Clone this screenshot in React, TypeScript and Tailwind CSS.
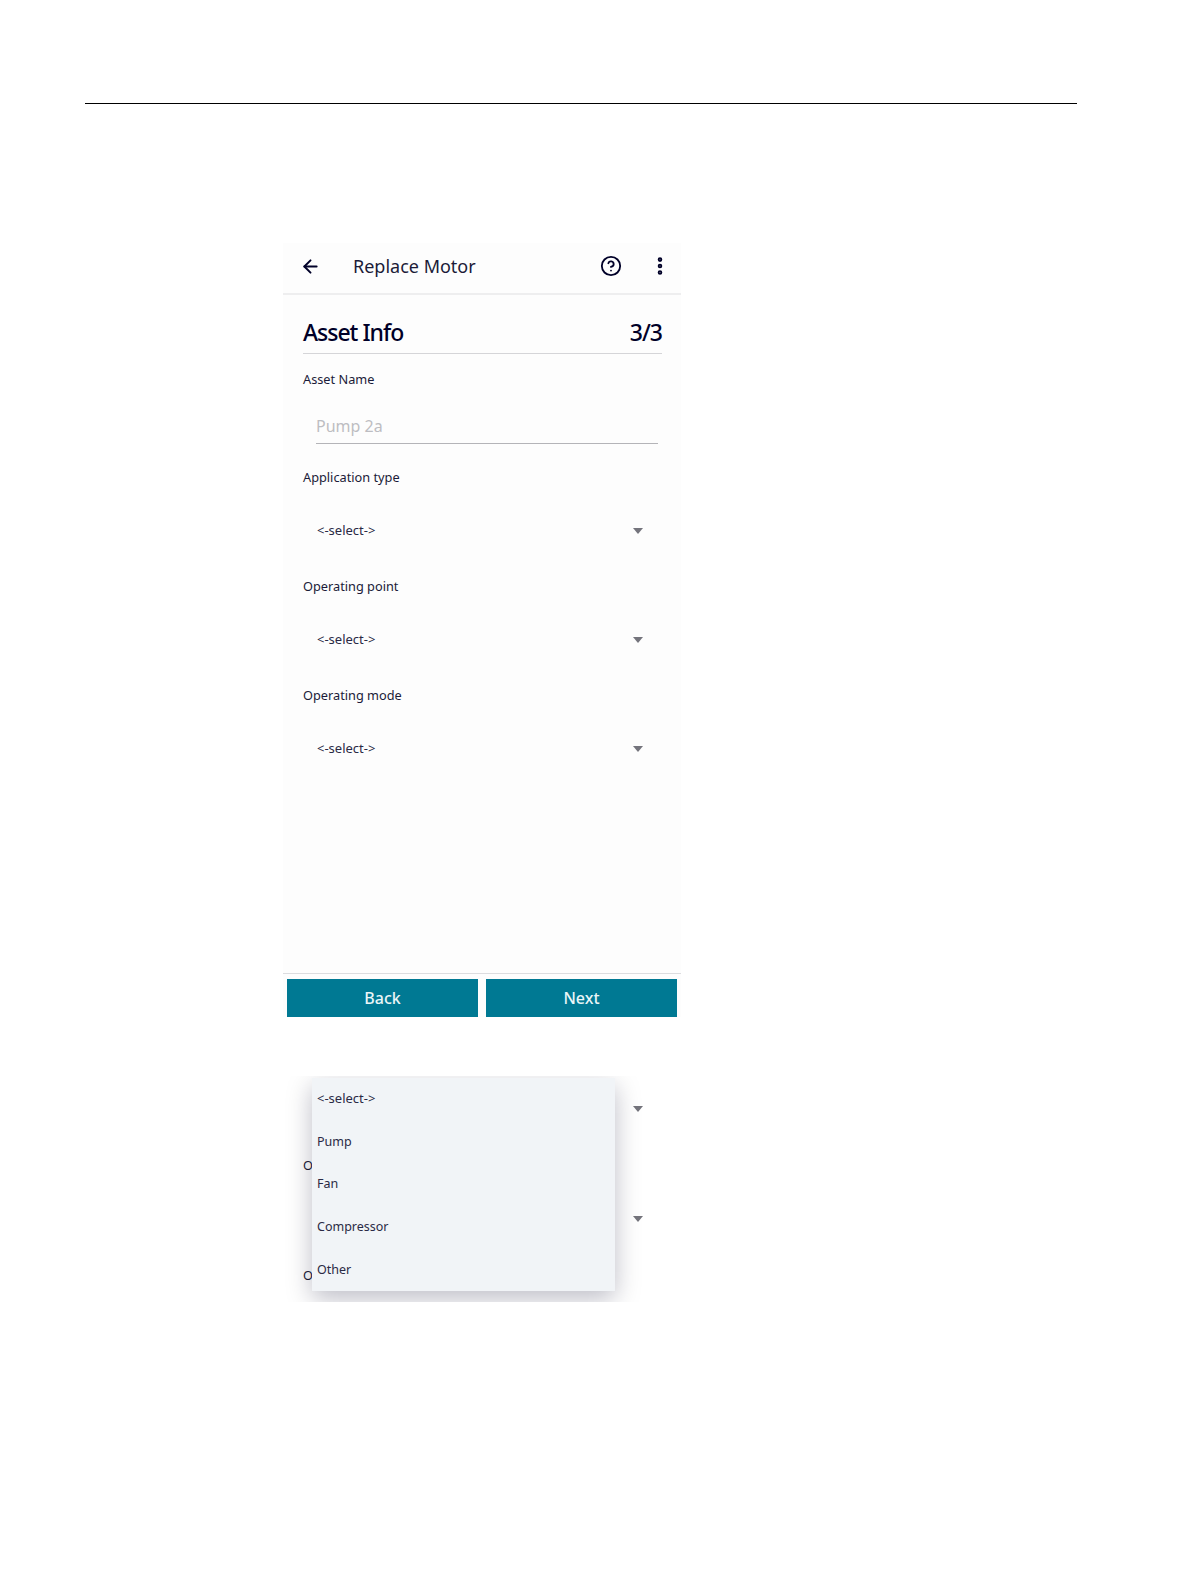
import React from 'react';
import { ArrowLeft, CircleHelp, EllipsisVertical } from 'lucide-react';

const fields = ['Application type', 'Operating point', 'Operating mode'];
const options = [
  { label: '<-select->', cls: 'text-[13px] pb-[2px]' },
  { label: 'Pump', cls: 'text-[12.5px]' },
  { label: 'Fan', cls: 'text-[12.5px]' },
  { label: 'Compressor', cls: 'text-[12.5px]' },
  { label: 'Other', cls: 'text-[12.5px] pt-[2px]' },
];

const Caret: React.FC = () => (
  <span className="w-0 h-0 border-x-[5.5px] border-x-transparent border-t-[6px] border-t-[#74747c]" />
);

const SelectRow: React.FC<{ label: string }> = ({ label }) => (
  <div className="flex flex-col">
    <div className="h-[20px] pb-[2px] flex items-center text-[12.75px] text-[#1b1b38] pl-[20px]">{label}</div>
    <div className="mt-[32px] h-[20px] flex items-center justify-between pl-[34px] pr-[38px] text-[13px] text-[#2a2a45]">
      <span>&lt;-select-&gt;</span>
      <Caret />
    </div>
  </div>
);

export default function App() {
  return (
    <div className="w-[1191px] h-[1587px] bg-white overflow-hidden font-['Noto_Sans',sans-serif]">
      <div className="pt-[103px] pl-[85px]">
        <div className="w-[992px] h-px bg-black" />
      </div>

      <div className="ml-[283px] w-[398px] mt-[139px] bg-[#fdfdfd]">
        {/* App bar */}
        <div className="h-[52px] flex items-center border-b-2 border-[#eeeeef] pl-[17px] pr-[10px] pb-[4px]">
          <ArrowLeft className="w-[21px] h-[21px] text-[#000028]" strokeWidth={2.25} />
          <span className="ml-[32px] text-[18px] text-[#1b1b38]">Replace Motor</span>
          <CircleHelp className="ml-auto w-[22px] h-[22px] text-[#000028]" strokeWidth={2} />
          <EllipsisVertical className="ml-[27px] w-[22px] h-[22px] text-[#000028]" strokeWidth={3} />
        </div>

        {/* Step title */}
        <div className="ml-[20px] mr-[19px] mt-[18px] h-[41px] pb-[2px] flex items-center justify-between border-b border-[#d5d5d8] text-[#000028] text-[23px] font-medium tracking-[-1px]">
          <span>Asset Info</span>
          <span>3/3</span>
        </div>

        <div className="mt-[17px] h-[20px] pb-[2px] flex items-center pl-[20px] text-[12.75px] text-[#1b1b38]">Asset Name</div>
        <div className="ml-[33px] mr-[23px] mt-[22px] h-[31px] pb-[5px] flex items-center border-b border-[#b4b4b8] text-[16px] text-[#bdbdc2]">
          Pump 2a
        </div>

        <div className="mt-[25px] flex flex-col gap-[37px]">
          {fields.map((f) => (
            <SelectRow key={f} label={f} />
          ))}
        </div>

        <div className="h-[214px]" />

        {/* Footer buttons */}
        <div className="border-t border-[#dcdcdf] pt-[5px] px-[4px] flex gap-[8px]">
          <button className="w-[191px] h-[38px] bg-[#007993] text-[#eaf6f8] text-[16px] font-medium">Back</button>
          <button className="w-[191px] h-[38px] bg-[#007993] text-[#eaf6f8] text-[16px] font-medium">Next</button>
        </div>
      </div>

      {/* Open dropdown, cropped screenshot */}
      <div className="relative ml-[283px] w-[398px] h-[226px] mt-[59px] overflow-hidden">
        <div className="pt-[23px] flex flex-col text-[#1b1b38]">
          <div className="h-[20px] flex justify-end pr-[38px] items-center"><Caret /></div>
          <div className="mt-[37px] h-[20px] pl-[20px] flex items-center text-[12.75px]">Operating point</div>
          <div className="mt-[33px] h-[20px] flex justify-end pr-[38px] items-center"><Caret /></div>
          <div className="mt-[37px] h-[20px] pl-[20px] flex items-center text-[12.75px]">Operating mode</div>
        </div>
        <div className="absolute left-[29px] top-[2px] w-[303px] h-[213px] bg-[#f1f4f7] shadow-[0_8px_24px_rgba(0,0,40,0.26)] flex flex-col">
          {options.map((o) => (
            <div key={o.label} className={`h-[42.6px] shrink-0 flex items-center pl-[5px] text-[#2a2a45] ${o.cls}`}>
              {o.label}
            </div>
          ))}
        </div>
      </div>
    </div>
  );
}
